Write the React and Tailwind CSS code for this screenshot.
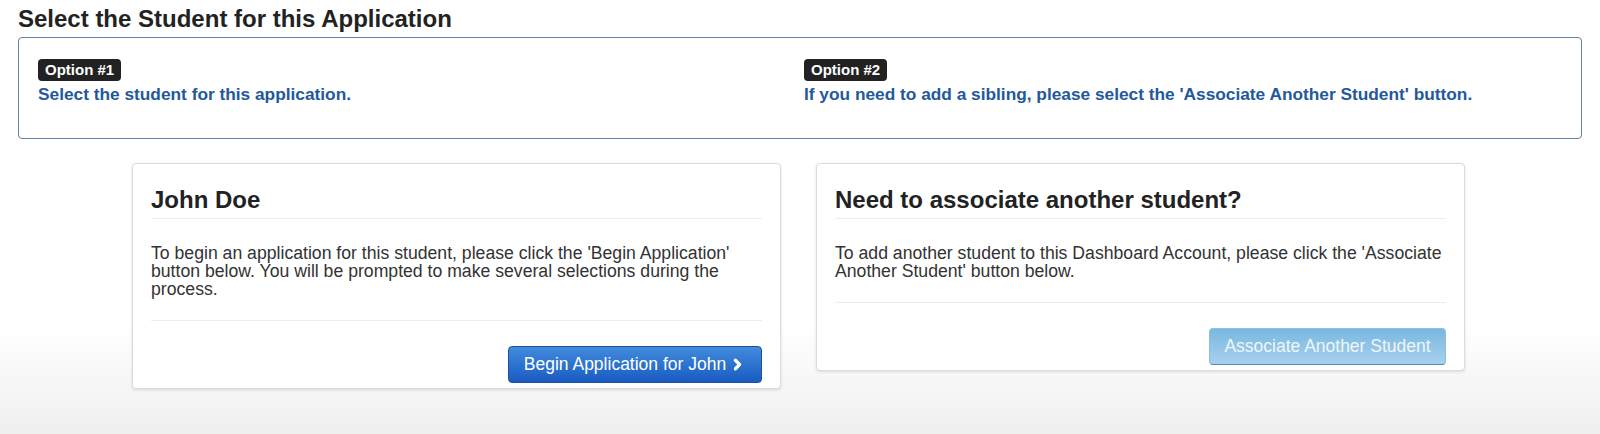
import { ChevronRight } from 'lucide-react';

/**
 * Student selection step
 * Two options: begin application for an existing student, or associate another
 */
const OptionNote = ({ label, text }) => (
    <div>
        <span className="inline-block rounded-[4px] bg-[#222] px-[7px] py-[2px] text-[15px] font-bold leading-[18px] text-white">
            {label}
        </span>
        <p className="mt-[2px] text-[17.3px] font-bold leading-[20px] text-[#23599b]">{text}</p>
    </div>
);

const StudentCard = ({ title, children, button }) => (
    <div className="w-[649px] rounded-[4px] border border-[#dcdcdc] bg-white px-[18px] pt-[22px] pb-[5px] shadow-[0_1px_3px_rgba(0,0,0,0.12)]">
        <h3 className="text-[24px] font-bold leading-[28px] text-[#222]">{title}</h3>
        <div className="mt-[4px] border-t border-[#ececec]" />
        <p className="mt-[25px] text-[17.65px] leading-[18px] text-[#333]">{children}</p>
        <div className="mt-[22px] border-t border-[#ececec]" />
        <div className="mt-[25px] flex justify-end">{button}</div>
    </div>
);

const App = () => {
    return (
        <div className="min-h-[434px] bg-linear-to-b from-white from-75% to-[#efefef] font-['Liberation_Sans',Arial,sans-serif]">
            <h2 className="px-[18px] pt-[5px] text-[24px] font-bold leading-[28px] text-[#222]">
                Select the Student for this Application
            </h2>

            {/* Option notes */}
            <div className="mx-[18px] mt-[4px] grid grid-cols-[766px_1fr] rounded-[4px] border border-[#5f86aa] bg-white pt-[20px] pb-[34px] pl-[19px]">
                <OptionNote label="Option #1" text="Select the student for this application." />
                <OptionNote
                    label="Option #2"
                    text="If you need to add a sibling, please select the 'Associate Another Student' button."
                />
            </div>

            {/* Cards */}
            <div className="mt-[24px] flex items-start gap-[35px] pl-[132px]">
                <StudentCard
                    title="John Doe"
                    button={
                        <button className="flex h-[37px] w-[254px] items-center justify-center gap-[3px] rounded-[4px] border border-[#1c4f9c] bg-linear-to-b from-[#418bdc] to-[#1a5bc2] text-[17.5px] text-white">
                            Begin Application for John
                            <ChevronRight size={17} strokeWidth={4.5} />
                        </button>
                    }
                >
                    To begin an application for this student, please click the 'Begin Application' button
                    below. You will be prompted to make several selections during the process.
                </StudentCard>

                <StudentCard
                    title="Need to associate another student?"
                    button={
                        <button className="h-[37px] w-[237px] rounded-[4px] border border-[#8cc0e2] border-b-[#4e8db9] bg-linear-to-b from-[#78b8e0] to-[#a9d0ee] text-[17.5px] text-[#eef6fb]">
                            Associate Another Student
                        </button>
                    }
                >
                    To add another student to this Dashboard Account, please click the 'Associate Another
                    Student' button below.
                </StudentCard>
            </div>
        </div>
    );
};

export default App;
